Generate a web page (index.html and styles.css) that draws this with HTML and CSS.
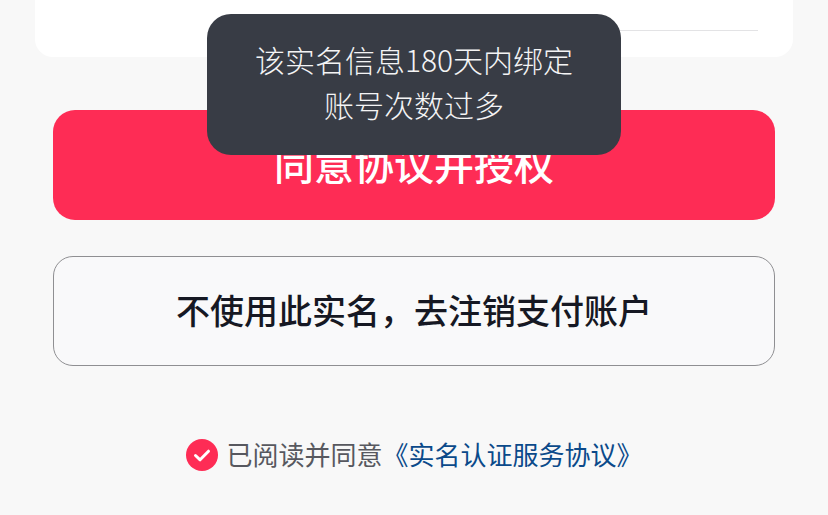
FILE: index.html
```html
<!DOCTYPE html>
<html lang="zh-CN">
<head>
<meta charset="utf-8">
<title>实名认证</title>
<link rel="stylesheet" href="styles.css">
</head>
<body>
<main class="page">
  <section class="card"><div class="divider"></div></section>
  <div class="actions">
    <button class="btn btn-primary">同意协议并授权</button>
    <button class="btn btn-outline">不使用此实名&#xFF0C;去注销支付账户</button>
  </div>
  <div class="agree">
    <svg class="check" viewBox="0 0 32 32" width="32" height="32" aria-hidden="true">
      <circle cx="16" cy="16" r="16" fill="#fe2c55"/>
      <path d="M9.5 16.5l4.6 4.3 8.4-8.6" fill="none" stroke="#fff" stroke-width="3" stroke-linecap="round" stroke-linejoin="round"/>
    </svg>
    <span class="agree-text">已阅读并同意</span><a class="agree-link">《实名认证服务协议》</a>
  </div>
</main>
<div class="toast">该实名信息180天内绑定<br>账号次数过多</div>
</body>
</html>
```

FILE: styles.css
```css
* { box-sizing: border-box; }
html, body { margin: 0; height: 100%; }
body {
  background: #f8f8f8;
  font-family: "Noto Sans CJK SC", "Noto Sans", sans-serif;
  overflow: hidden;
}
.page { display: flex; flex-direction: column; height: 515px; }
.card {
  height: 57px;
  margin: 0 35px;
  padding: 30px 35px 0 210px;
  background: #fff;
  border-radius: 0 0 18px 18px;
}
.divider { height: 1px; background: #e3e3e5; }
.actions {
  display: flex;
  flex-direction: column;
  gap: 36px;
  margin: 53px 53px 0;
}
.btn {
  display: block;
  width: 100%;
  height: 110px;
  font-family: inherit;
  padding: 0;
}
.btn-primary {
  background: #fe2c55;
  border: 0;
  border-radius: 22px;
  color: #fff;
  font-size: 40px;
  font-weight: 500;
  padding-bottom: 4px;
}
.btn-outline {
  background: #f9f9fa;
  border: 1px solid #8f8f92;
  border-radius: 20px;
  color: #161823;
  font-size: 34px;
  font-weight: 500;
  padding-bottom: 3px;
}
.agree {
  display: flex;
  align-items: center;
  justify-content: center;
  margin-top: 73px;
  height: 32px;
  font-size: 26px;
  line-height: 30px;
  padding-left: 1px;
}
.check { flex: none; margin: -1px 8px 0 0; }
.agree-text { color: #57585f; margin-bottom: 2px; }
.agree-link { color: #0b4a8a; margin-bottom: 2px; }
.toast {
  position: absolute;
  left: 207px;
  top: 14px;
  width: 414px;
  height: 141px;
  padding-top: 23px;
  background: #383c45;
  border-radius: 24px;
  color: #f4f4f5;
  font-size: 30px;
  font-weight: 300;
  line-height: 45px;
  text-align: center;
}
```
